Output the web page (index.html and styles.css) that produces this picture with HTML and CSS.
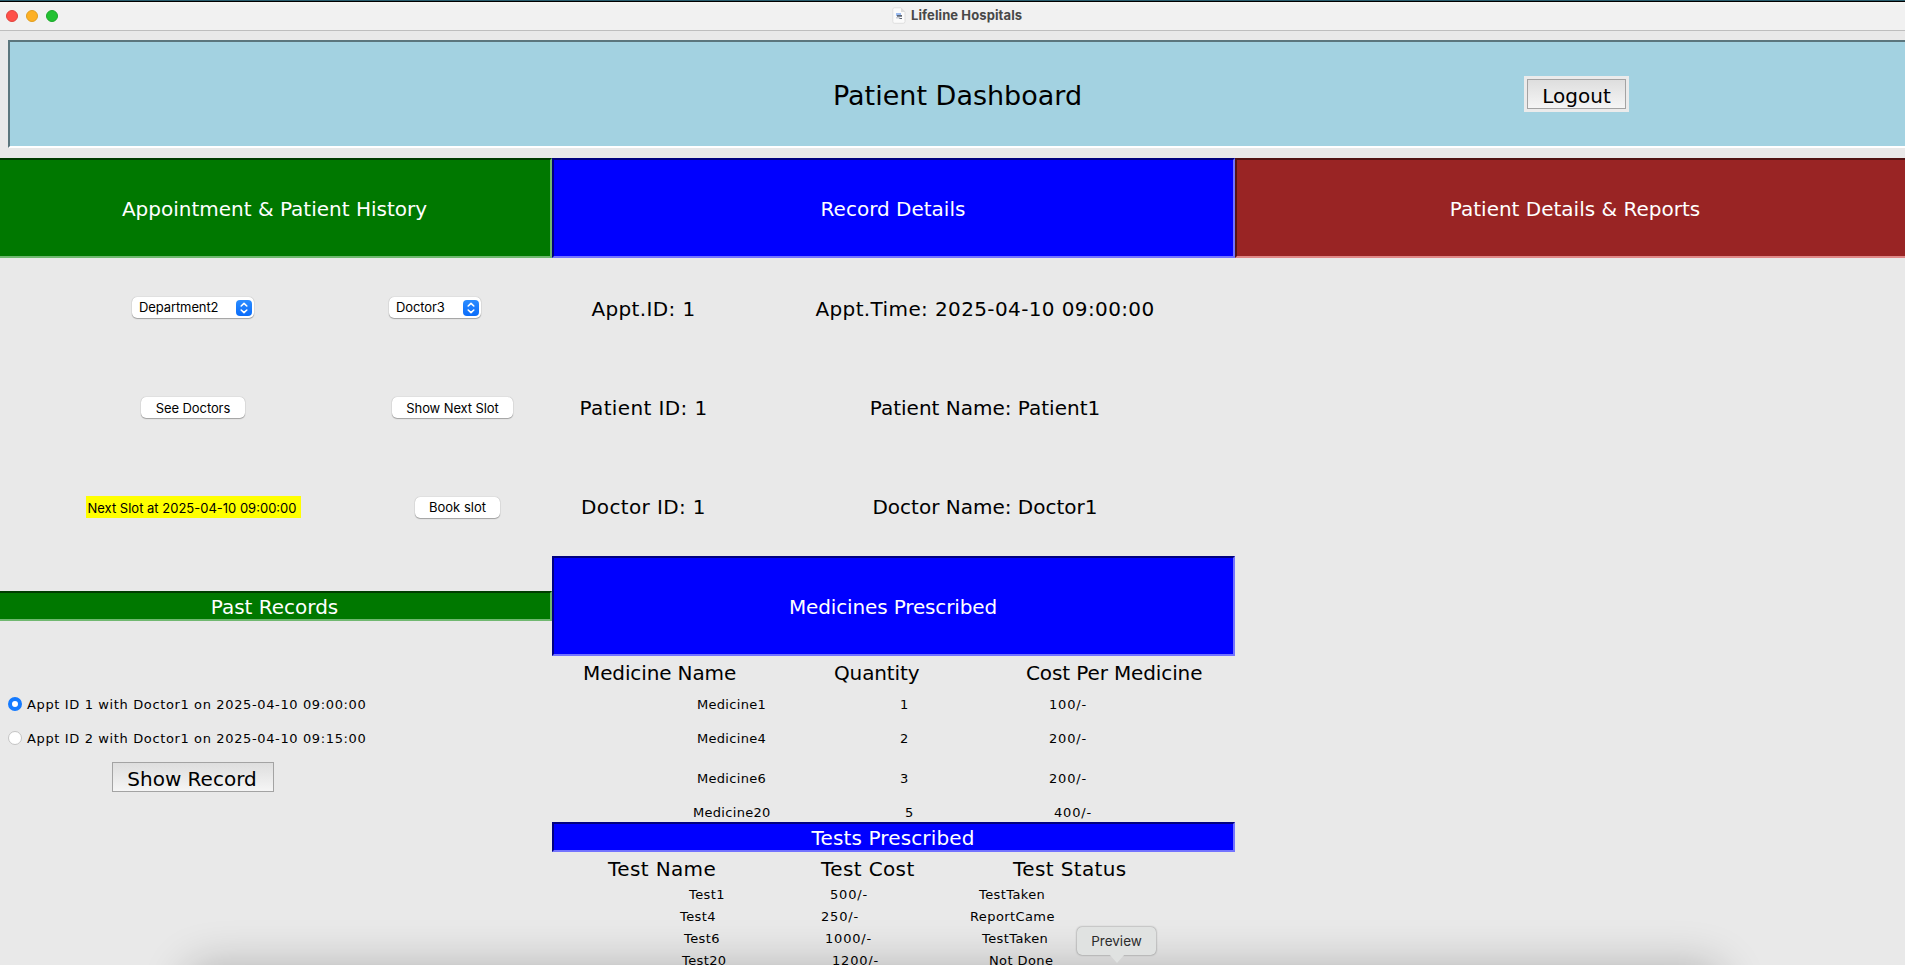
FILE: index.html
```html
<!DOCTYPE html>
<html lang="en">
<head>
<meta charset="utf-8">
<title>Lifeline Hospitals</title>
<link rel="stylesheet" href="styles.css">
</head>
<body>
<div class="window">
  <div class="titlebar">
    <div class="lights"><span class="light red"></span><span class="light amber"></span><span class="light green"></span></div>
    <div class="window-title">
      <svg class="doc-icon" width="14" height="17" viewBox="0 0 14 17"><path d="M2.500.8H9L13 5v9.500a1.800 1.800 0 0 1-1.800 1.800H2.500A1.700 1.700 0 0 1 .8 14.600V2.500A1.700 1.700 0 0 1 2.500.8z" fill="#fbfbfb" stroke="#d9d9d9" stroke-width=".8"/><path d="M9 .8V5h4z" fill="#dcdcdc"/><path d="M4 6h5v3H4z" fill="#9cbcf0"/><path d="M5 8h5v1.800H5zM7 11h3v1H7z" fill="#5c6675"/><path d="M4 10h4v1.500H4z" fill="#c9cdd4"/></svg>
      <span class="t title-text">Lifeline Hospitals</span>
    </div>
  </div>

  <header class="banner">
    <h1 class="t banner-title">Patient Dashboard</h1>
    <div class="logout-wrap"><button class="classic logout"><span class="t">Logout</span></button></div>
  </header>

  <main class="columns">
    <section class="left">
      <h2 class="bar bar-green"><span class="t">Appointment &amp; Patient History</span></h2>
      <div class="controls">
        <div class="control-row">
          <div class="cell-a"><div class="select department"><span class="t">Department2</span><svg class="stepper" width="16" height="16" viewBox="0 0 16 16"><path d="M5.200 6 8 3.300 10.800 6M5.200 10 8 12.700 10.800 10"/></svg></div></div>
          <div class="select doctor"><span class="t">Doctor3</span><svg class="stepper" width="16" height="16" viewBox="0 0 16 16"><path d="M5.200 6 8 3.300 10.800 6M5.200 10 8 12.700 10.800 10"/></svg></div>
        </div>
        <div class="control-row">
          <div class="cell-a"><button class="aqua see"><span class="t">See Doctors</span></button></div>
          <button class="aqua next"><span class="t">Show Next Slot</span></button>
        </div>
        <div class="control-row">
          <div class="cell-a"><div class="slot"><span class="t">Next Slot at 2025-04-10 09:00:00</span></div></div>
          <button class="aqua book"><span class="t">Book slot</span></button>
        </div>
      </div>
      <h2 class="bar bar-green slim past"><span class="t">Past Records</span></h2>
      <div class="radios">
        <div class="radio"><span class="dot on"></span><span class="t">Appt ID 1 with Doctor1 on 2025-04-10 09:00:00</span></div>
        <div class="radio"><span class="dot"></span><span class="t">Appt ID 2 with Doctor1 on 2025-04-10 09:15:00</span></div>
      </div>
      <div class="cell-a"><button class="classic show"><span class="t">Show Record</span></button></div>
    </section>

    <section class="middle">
      <h2 class="bar bar-blue"><span class="t">Record Details</span></h2>
      <div class="facts">
        <span class="t wide">Appt.ID: 1</span><span class="t wide">Appt.Time: 2025-04-10 09:00:00</span>
        <span class="t wide">Patient ID: 1</span><span class="t">Patient Name: Patient1</span>
        <span class="t wide">Doctor ID: 1</span><span class="t">Doctor Name: Doctor1</span>
      </div>
      <h2 class="bar bar-blue medicines"><span class="t">Medicines Prescribed</span></h2>
      <div class="row heads med-heads"><span class="t">Medicine Name</span><span class="t">Quantity</span><span class="t">Cost Per Medicine</span></div>
      <div class="row med m1"><span class="t">Medicine1</span><span class="t">1</span><span class="t">100/-</span></div>
      <div class="row med m2"><span class="t">Medicine4</span><span class="t">2</span><span class="t">200/-</span></div>
      <div class="row med m3"><span class="t">Medicine6</span><span class="t">3</span><span class="t">200/-</span></div>
      <div class="row med m4"><span class="t">Medicine20</span><span class="t">5</span><span class="t">400/-</span></div>
      <h2 class="bar bar-blue slim tests"><span class="t">Tests Prescribed</span></h2>
      <div class="row heads test-heads"><span class="t">Test Name</span><span class="t">Test Cost</span><span class="t">Test Status</span></div>
      <div class="row test t1"><span class="t">Test1</span><span class="t">500/-</span><span class="t">TestTaken</span></div>
      <div class="row test t2"><span class="t">Test4</span><span class="t">250/-</span><span class="t">ReportCame</span></div>
      <div class="row test t3"><span class="t">Test6</span><span class="t">1000/-</span><span class="t">TestTaken</span></div>
      <div class="row test t4"><span class="t">Test20</span><span class="t">1200/-</span><span class="t">Not Done</span></div>
    </section>

    <section class="right">
      <h2 class="bar bar-red"><span class="t">Patient Details &amp; Reports</span></h2>
    </section>
  </main>
  <div class="dock-shadow"></div>
  <div class="tooltip"><span class="t">Preview</span></div>
</div>
</body>
</html>
```
FILE: styles.css
```css
* { box-sizing: border-box; }
body { margin: 0; background: #e9e9e9; color: #000; font-family: "DejaVu Sans", Verdana, sans-serif; font-size: 20px; }
h1, h2 { margin: 0; font-weight: 400; }
button { font: inherit; color: inherit; padding: 0; margin: 0; }
.t { white-space: nowrap; }

.window { position: relative; width: 1905px; height: 965px; overflow: hidden; }

.titlebar { height: 31px; border-top: 1px solid #2a5e6e; border-bottom: 1px solid #bebebe; background: linear-gradient(#000 0 1px, #f6f6f3 1px, #f1f1f1 6px); display: flex; align-items: center; padding-left: 6px; }
.lights { display: flex; gap: 8px; width: 886px; }
.light { width: 12px; height: 12px; border-radius: 50%; }
.red { background: #ff5049; border: 1px solid #e0443e; }
.amber { background: #fdb024; border: 1px solid #e09e1f; }
.green { background: #22c132; border: 1px solid #1aa82a; }
.window-title { display: flex; align-items: center; gap: 5px; padding-bottom: 1px; }
.title-text { font: 700 13px/16px Inter, sans-serif; letter-spacing: .1px; color: #484848; }

.banner { margin: 9px 0 10px 8px; height: 108px; border: 2px solid; border-color: #5b767d #a3d2e1 #fff #5b767d; border-right: 0; background: #a3d2e1; display: flex; align-items: center; }
.banner-title { font-size: 27px; width: 691px; margin-left: 823px; padding-top: 2px; }
.logout-wrap { width: 105px; height: 36px; background: #ebebeb; padding: 3px; }

.classic { border: 1px solid #a3a3a3; background: linear-gradient(#dedede, #f5f5f5); height: 30px; display: flex; align-items: center; justify-content: center; padding-top: 3px; }
.logout { width: 99px; }
.show { width: 162px; padding-right: 2px; }

.columns { display: grid; grid-template-columns: 552px 683px 681px; }
.bar { height: 100px; border: 2px solid; color: #fff; font-size: 20px; display: flex; align-items: center; justify-content: center; padding: 2px 1px 0 0; }
.slim { height: 30px; }
.bar-green { background: #007800; border-color: #003c00 #70b870 #70b870 #003c00; border-left: 0; }
.bar-blue { background: #00f; border-color: #000080 #7373ff #7373ff #000080; }
.bar-red { background: #992424; border-color: #521414 #e08888 #e08888 #521414; }
.medicines { letter-spacing: -.14px; }
.tests { letter-spacing: .13px; }

.controls { height: 333px; display: grid; grid-template-rows: 99px 101px 98px; font: 13px/16px Inter, sans-serif; }
.control-row { display: flex; align-items: center; }
.cell-a { width: 386px; display: flex; justify-content: center; }
.aqua, .select { height: 21px; border: 0; border-radius: 5px; background: #fff; box-shadow: 0 0 1px rgba(0,0,0,.35), 0 1px 1px rgba(0,0,0,.28); display: flex; align-items: center; justify-content: center; }
.select { justify-content: space-between; padding: 0 2px 0 7px; }
.select .t { padding-bottom: 1px; letter-spacing: -.1px; }
.department { width: 122px; }
.doctor { width: 92px; margin-left: 3px; }
.see { width: 104px; letter-spacing: -.1px; }
.next { width: 121px; margin-left: 6px; letter-spacing: -.1px; }
.book { width: 85px; margin-left: 29px; }
.slot { width: 215px; height: 22px; padding: 2px 2px 0 0; background: #ff0; display: flex; align-items: center; justify-content: center; }
.stepper { border-radius: 4px; background: linear-gradient(#2a8cff, #0a6cfa); }
.stepper path { fill: none; stroke: #fff; stroke-width: 1.6; stroke-linecap: round; stroke-linejoin: round; }

.radios { padding: 66px 0 7px 8px; font-size: 13px; }
.radio { height: 34px; display: flex; align-items: center; gap: 5px; letter-spacing: .63px; }
.dot { width: 14px; height: 14px; border-radius: 50%; background: #fff; border: 1px solid #c4c4c4; }
.dot.on { border: 4px solid #147aff; }

.facts { height: 298px; display: grid; grid-template-columns: 183px 500px; grid-template-rows: repeat(3, 1fr); align-items: center; justify-items: center; padding-top: 2px; }
.wide { letter-spacing: .38px; }
.row { display: grid; align-items: center; font-size: 13px; letter-spacing: .5px; }
.heads { font-size: 20px; letter-spacing: 0; }
.med-heads { height: 34px; padding-left: 31px; grid-template-columns: 251px 192px 1fr; letter-spacing: -.12px; }
.med { padding: 0 0 2px 145px; grid-template-columns: 203px 149px 1fr; letter-spacing: .3px; }
.med .t:last-child, .test .t:nth-child(2) { letter-spacing: .8px; }
.m1 { height: 30px; }
.m2 { height: 38px; }
.m3 { height: 42px; }
.m4 { height: 22px; padding: 2px 0 0 141px; grid-template-columns: 212px 149px 1fr; }
.test-heads { height: 32px; padding: 2px 0 0 56px; grid-template-columns: 213px 192px 1fr; letter-spacing: .38px; }
.test { height: 22px; padding-bottom: 2px; grid-template-columns: 141px 149px 1fr; letter-spacing: .4px; }
.t1 { padding-left: 137px; }
.t2 { padding-left: 128px; }
.t3 { padding-left: 132px; grid-template-columns: 141px 157px 1fr; }
.t4 { padding-left: 130px; grid-template-columns: 150px 157px 1fr; }

.dock-shadow { position: absolute; left: 187px; top: 966px; width: 1535px; height: 100px; border-radius: 20px; box-shadow: 0 0 46px rgba(0,0,0,.24); }
.tooltip { position: absolute; left: 1077px; top: 927px; width: 79px; height: 28px; border-radius: 5px; background: #e0e2e1; box-shadow: 0 0 2px rgba(0,0,0,.5); display: flex; align-items: center; justify-content: center; font: 13.5px/16px Inter, sans-serif; color: #2c2c2c; }
.tooltip::after { content: ""; position: absolute; left: 32px; top: 27px; width: 16px; height: 9px; background: #e0e2e1; clip-path: polygon(0 0, 100% 0, 50% 100%); }
```
